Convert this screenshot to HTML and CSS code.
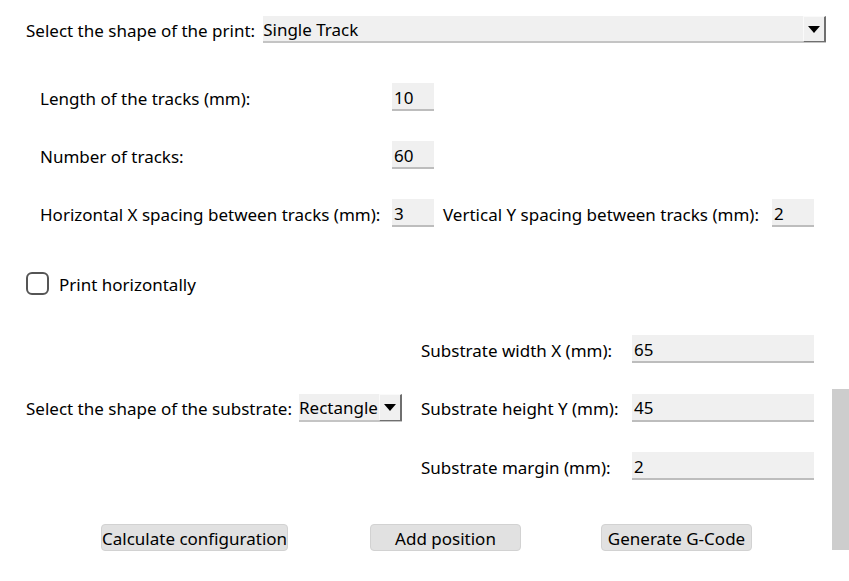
FILE: index.html
```html
<!DOCTYPE html>
<html>
<head>
<meta charset="utf-8">
<link rel="stylesheet" href="styles.css">
</head>
<body>
<div class="app">
  <div class="row row-print">
    <span class="lbl">Select the shape of the print:</span>
    <div class="combo combo-wide">
      <span class="combo-text">Single Track</span>
      <span class="combo-btn"><span class="tri"></span></span>
    </div>
  </div>

  <div class="row row-param first">
    <span class="lbl lbl-param">Length of the tracks (mm):</span>
    <div class="entry small">10</div>
  </div>

  <div class="row row-param">
    <span class="lbl lbl-param">Number of tracks:</span>
    <div class="entry small">60</div>
  </div>

  <div class="row row-param">
    <span class="lbl lbl-param">Horizontal X spacing between tracks (mm):</span>
    <div class="entry small">3</div>
    <span class="lbl lbl-vert">Vertical Y spacing between tracks (mm):</span>
    <div class="entry small">2</div>
  </div>

  <div class="row row-check">
    <span class="checkbox"></span>
    <span class="lbl">Print horizontally</span>
  </div>

  <div class="substrate">
    <div class="sub-left">
      <span class="lbl">Select the shape of the substrate:</span>
      <div class="combo combo-small">
        <span class="combo-text">Rectangle</span>
        <span class="combo-btn"><span class="tri"></span></span>
      </div>
    </div>
    <div class="sub-right">
      <span class="lbl">Substrate width X (mm):</span>
      <div class="entry wide">65</div>
      <span class="lbl">Substrate height Y (mm):</span>
      <div class="entry wide">45</div>
      <span class="lbl">Substrate margin (mm):</span>
      <div class="entry wide">2</div>
    </div>
  </div>

  <div class="buttons">
    <button class="btn btn-calc">Calculate configuration</button>
    <button class="btn btn-add">Add position</button>
    <button class="btn btn-gen">Generate G-Code</button>
  </div>

  <div class="scroll-thumb"></div>
</div>
</body>
</html>
```

FILE: styles.css
```css
html, body {
  margin: 0;
  padding: 0;
  background: #ffffff;
}
body {
  font-family: "Noto Sans", "Open Sans", sans-serif;
  font-size: 17px;
  color: #000;
  width: 849px;
  height: 581px;
  overflow: hidden;
}
.app {
  position: relative;
  width: 849px;
  height: 581px;
}
.row {
  display: flex;
  align-items: center;
}
.lbl {
  white-space: nowrap;
  line-height: 1;
  padding-top: 2px;
}
.row-print {
  padding: 16px 23px 0 26px;
  height: 27px;
}
.row-print .lbl {
  margin-right: 8px;
}
.combo {
  display: flex;
  align-items: stretch;
  background: #f0f0f0;
  border-bottom: 2px solid #c4c4c4;
  box-sizing: border-box;
}
.combo-wide {
  flex: 1;
  height: 27px;
}
.combo-text {
  flex: 1;
  display: flex;
  align-items: center;
  padding-top: 2px;
  line-height: 1;
  white-space: nowrap;
}
.combo-btn {
  width: 23px;
  box-sizing: border-box;
  border-top: 1px solid #fafafa;
  border-left: 1px solid #fafafa;
  border-right: 2px solid #6f6f6f;
  border-bottom: 1px solid #6f6f6f;
  margin-bottom: -1px;
  display: flex;
  align-items: center;
  justify-content: center;
  background: #f0f0f0;
}
.tri {
  width: 0;
  height: 0;
  border-left: 6px solid transparent;
  border-right: 6px solid transparent;
  border-top: 7px solid #000;
}
.row-param {
  padding-left: 40px;
  height: 28px;
  margin-top: 30px;
}
.row-param.first {
  margin-top: 40px;
}
.lbl-param {
  width: 352px;
}
.lbl-vert {
  width: 329px;
  margin-left: 9px;
}
.entry {
  height: 28px;
  box-sizing: border-box;
  background: #f0f0f0;
  border-bottom: 2px solid #bdbdbd;
  display: flex;
  align-items: center;
  padding-left: 2px;
  padding-top: 2px;
  line-height: 1;
}
.entry.small {
  width: 42px;
}
.entry.wide {
  width: 182px;
}
.row-check {
  padding-left: 26px;
  margin-top: 44px;
  height: 25px;
}
.checkbox {
  width: 23px;
  height: 23px;
  box-sizing: border-box;
  border: 2px solid #555;
  border-radius: 6px;
  margin-right: 10px;
}
.substrate {
  display: flex;
  align-items: center;
  margin-top: 39px;
}
.sub-left {
  display: flex;
  align-items: center;
  padding-left: 26px;
  width: 395px;
}
.sub-left .lbl {
  margin-right: 7px;
}
.combo-small {
  height: 28px;
  width: 103px;
}
.combo-small .combo-text {
  padding-left: 0;
}
.sub-right {
  display: grid;
  grid-template-columns: 211px 182px;
  row-gap: 30.5px;
  align-items: center;
}
.buttons {
  display: flex;
  margin-top: 44px;
  padding-left: 101px;
}
.btn {
  font-family: inherit;
  font-size: 17px;
  height: 27px;
  background: #e1e1e1;
  border: 1px solid #d2d2d2;
  border-radius: 4px;
  padding: 2px 0 0;
  color: #000;
  line-height: 1;
  white-space: nowrap;
}
.btn-calc { width: 187px; }
.btn-add { width: 151px; margin-left: 82px; }
.btn-gen { width: 151px; margin-left: 80px; }
.scroll-thumb {
  position: absolute;
  left: 832px;
  top: 389px;
  width: 17px;
  height: 161px;
  background: #cdcdcd;
}
```
